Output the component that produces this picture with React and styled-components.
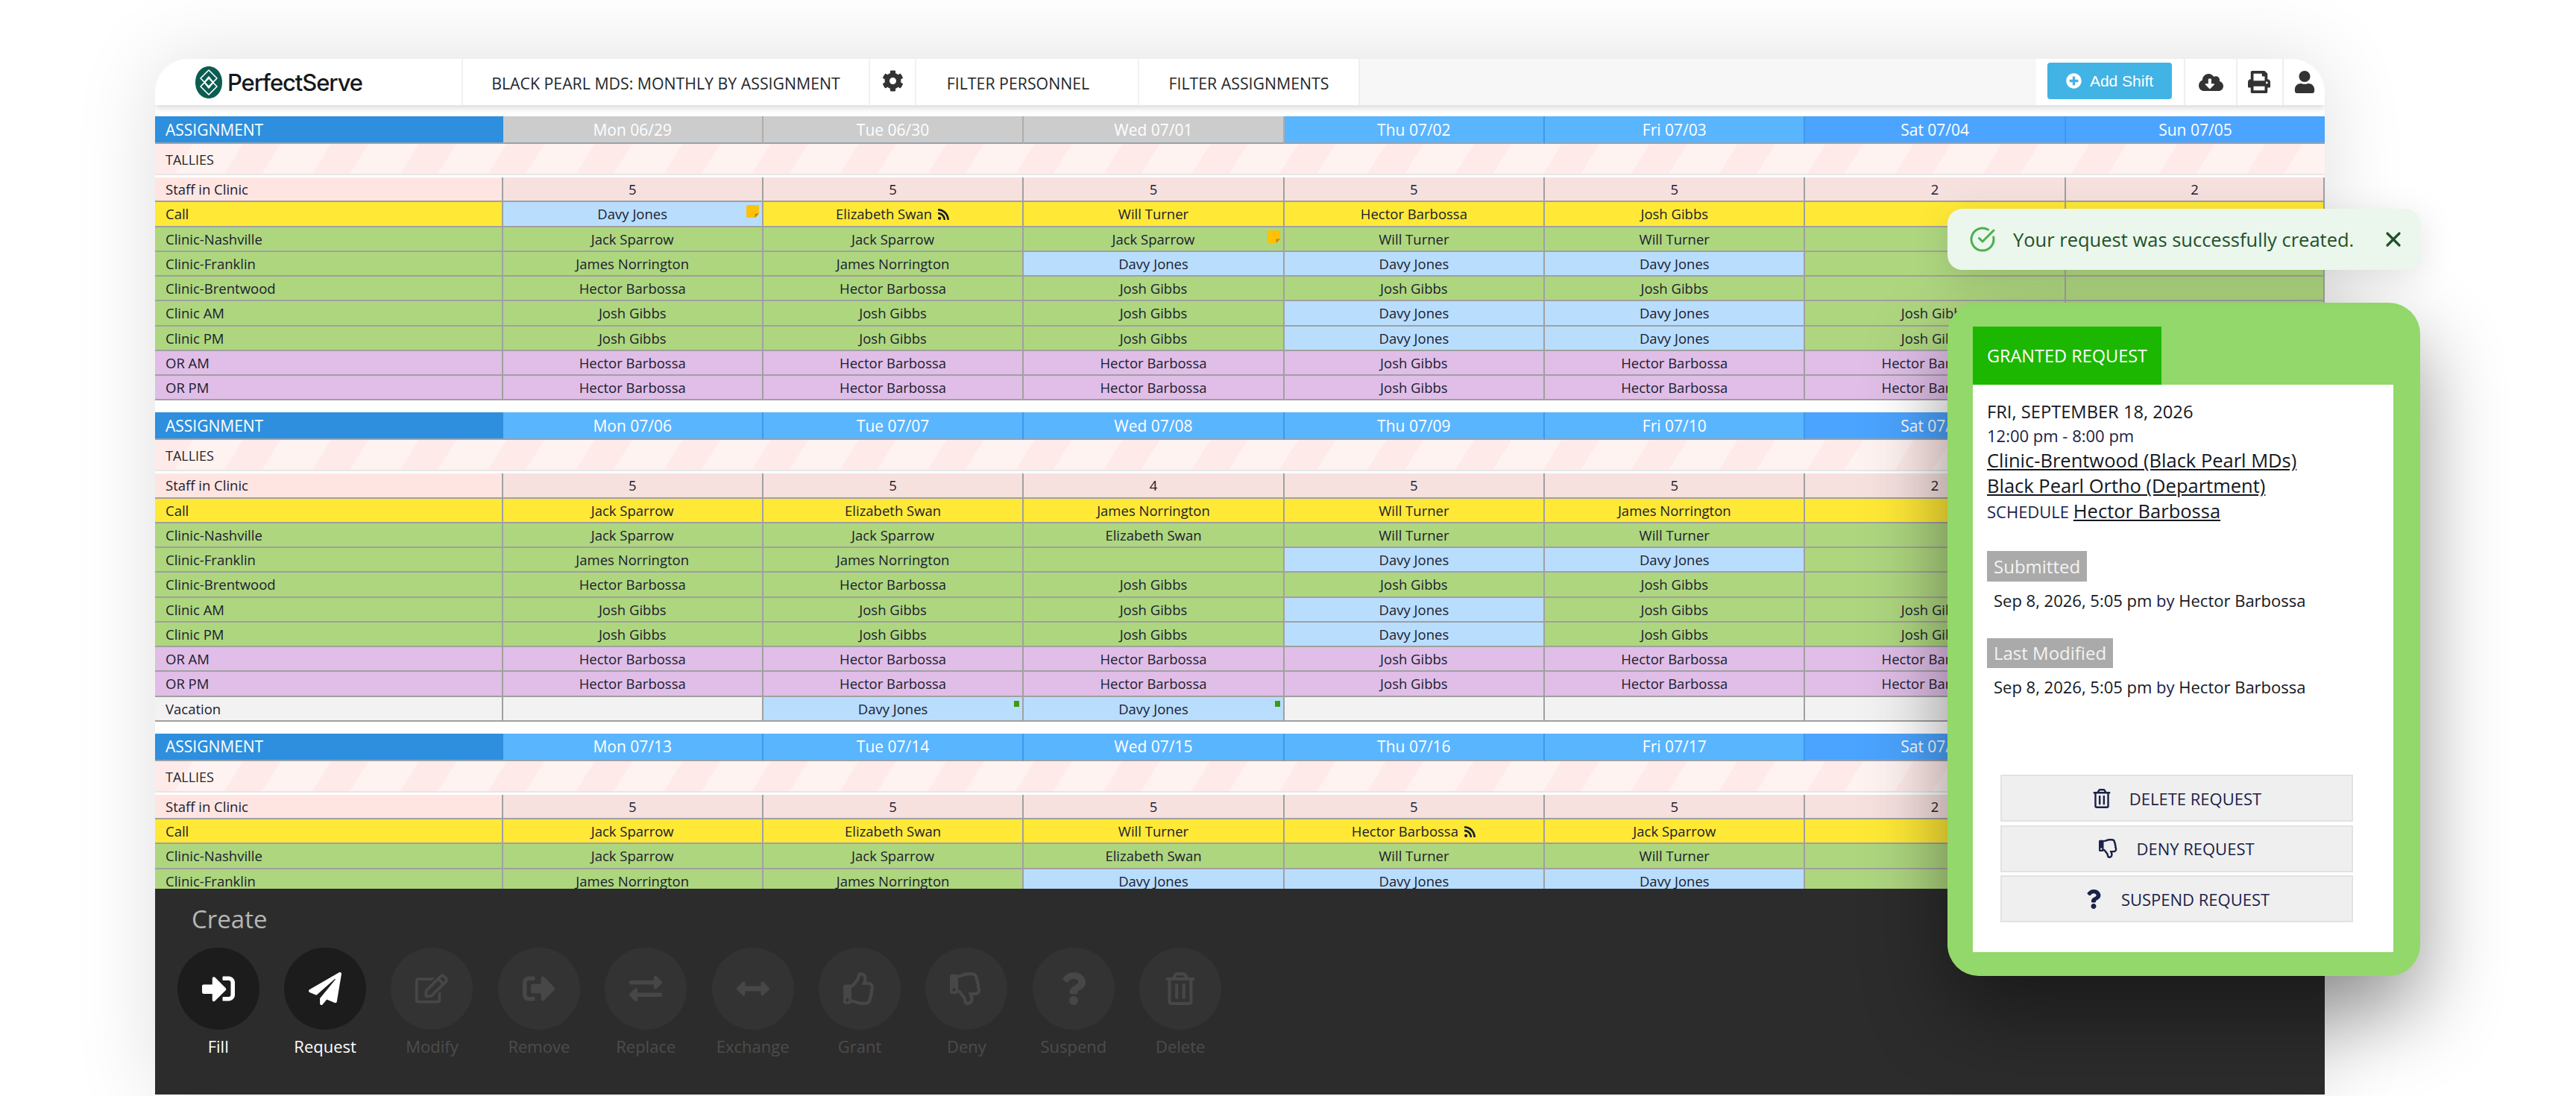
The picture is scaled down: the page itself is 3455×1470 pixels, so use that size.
import React from 'react';
import styled, { createGlobalStyle } from 'styled-components';
import { FaCog, FaCloudDownloadAlt, FaPrint, FaUser, FaRss, FaSignInAlt, FaSignOutAlt, FaPaperPlane, FaRegEdit, FaExchangeAlt, FaArrowsAltH, FaRegThumbsUp, FaRegThumbsDown, FaQuestion, FaRegTrashAlt, FaPlusCircle } from 'react-icons/fa';
import { CircleCheckBig, X } from 'lucide-react';

const Global = createGlobalStyle`
  html, body { margin: 0; padding: 0; background: #fff; }
  body { font-family: "Open Sans", "Liberation Sans", sans-serif; color: #1a2030; }
  * { box-sizing: border-box; }
`;

const Page = styled.div`
  position: relative;
  width: 3455px;
  height: 1470px;
  overflow: hidden;
  padding: 79px 0 0 208px;
`;
const Window = styled.div`
  width: 2910px;
  height: 1389px;
  display: flex;
  flex-direction: column;
  border-radius: 45px 45px 0 0;
  background: #fff;
  overflow: hidden;
  box-shadow: 0 0 110px rgba(0, 0, 0, 0.13);
`;
const Header = styled.header`
  flex: 0 0 62px;
  display: flex;
  align-items: stretch;
  background: #f7f7f7;
  box-shadow: 0 4px 8px rgba(0, 0, 0, 0.14);
  position: relative;
  z-index: 1;
`;
const LogoTab = styled.div`
  width: 411px;
  display: flex;
  align-items: center;
  gap: 7px;
  padding-left: 54px;
  background: #fff;
`;
const Wordmark = styled.span`
  font-family: Inter, "Liberation Sans", sans-serif;
  font-weight: 500;
  font-size: 31px;
  letter-spacing: -1.1px;
  color: #16191c;
`;
const NavTab = styled.div`
  width: ${p => p.$w}px;
  display: flex;
  align-items: center;
  justify-content: center;
  background: #fff;
  border-left: 2px solid #f1f1f1;
  font-size: 21.3px;
  color: #23272b;
  padding: 3px ${p => p.$shift || 0}px 0 0;
  svg { color: #333; font-size: 29px; margin-top: -6px; }
`;
const HeaderSpacer = styled.div`
  flex: 1;
  border-left: 2px solid #eee;
`;
const ActionArea = styled.div`
  width: 387px;
  display: flex;
  background: #fff;
`;
const AddShift = styled.button`
  width: 167px;
  height: 49px;
  margin: 5px 16px 0 15px;
  border: 0;
  border-radius: 4px;
  background: #41b3e4;
  color: #fff;
  font-family: "Liberation Sans", sans-serif;
  font-size: 21px;
  display: flex;
  align-items: center;
  justify-content: center;
  gap: 11px;
  svg { font-size: 21px; }
`;
const IconTab = styled.div`
  width: ${p => p.$w}px;
  display: flex;
  align-items: center;
  justify-content: center;
  border-left: 2px solid #eee;
  color: #333;
  padding-right: ${p => p.$shift || 0}px;
  font-size: ${p => p.$s}px;
`;
const Calendar = styled.main`
  flex: 1;
  min-height: 0;
  padding-top: 15px;
  overflow: hidden;
  display: flex;
  flex-direction: column;
  gap: 16px;
`;
const Week = styled.section`
  flex: none;
`;
const Grid = styled.div`
  display: grid;
  grid-template-columns: 466.5px repeat(6, 349.4px) 1fr;
`;
const DayHead = styled.div`
  height: 37px;
  display: flex;
  align-items: center;
  justify-content: center;
  color: #fff;
  font-size: 21px;
  background: ${p => ({ grey: '#cccccc', light: '#5ab5ff', dark: '#4ba4ff' }[p.$tone])};
  border-bottom: 2px solid #98a2ab;
  border-right: 2px solid ${p => (p.$tone === 'grey' ? '#adadad' : '#3f98ea')};
  &:last-child { border-right: 0; }
`;
const AssignHead = styled(DayHead)`
  background: #2d8fdd;
  justify-content: flex-start;
  padding-left: 14px;
  border-right: 0;
`;
const Tallies = styled.div`
  height: 45px;
  border-bottom: 3px solid #fff;
  display: flex;
  align-items: center;
  padding-left: 14px;
  font-size: 18px;
  color: #23272b;
  background: repeating-linear-gradient(122deg, #feebe9 0 43px, #fff3f2 43px 100px);
  box-shadow: inset 0 -2px 0 #e6e6e6;
`;
const rowBg = { staff: '#ffe5e2', call: '#ffe936', clinic: '#aed67f', or: '#e0bee7', vac: '#f2f2f2' };
const Label = styled.div`
  height: 33.25px;
  display: flex;
  align-items: center;
  padding-left: 14px;
  font-size: 18.5px;
  background: ${p => rowBg[p.$kind]};
  border-bottom: 2px solid #a0a0a0;
  border-right: 2px solid #a0a0a0;
`;
const Cell = styled.div`
  position: relative;
  height: 33.25px;
  display: flex;
  align-items: center;
  justify-content: center;
  gap: 7px;
  font-size: 18.5px;
  background: ${p => (p.$blue ? '#b9ddfd' : p.$kind === 'staff' ? '#f6e1df' : rowBg[p.$kind])};
  border-bottom: 2px solid #a0a0a0;
  border-right: 2px solid #a0a0a0;
  &:last-child { border-right: 0; }
  svg.rss { font-size: 17px; margin-top: 2px; }
`;
const NoteMark = styled.svg`
  position: absolute;
  top: 4px;
  right: 3px;
  width: 18px;
  height: 18px;
`;
const GreenMark = styled.span`
  position: absolute;
  top: 5px;
  right: 4px;
  width: 7px;
  height: 8px;
  background: #3f9a12;
`;
const Dock = styled.footer`
  flex: 0 0 276px;
  background: #2c2c2c;
  position: relative;
  z-index: 1;
  padding: 20px 0 0 13px;
`;
const DockTitle = styled.h2`
  margin: 0 0 17px 36px;
  font-weight: 400;
  font-size: 33px;
  line-height: 42px;
  color: #b5b5b5;
`;
const DockRow = styled.div`
  display: flex;
`;
const DockItem = styled.div`
  width: 143.4px;
  display: flex;
  flex-direction: column;
  align-items: center;
  gap: 7px;
  font-size: 22px;
  line-height: 30px;
  color: ${p => (p.$on ? '#fff' : '#4c4c4c')};
`;
const DockCircle = styled.div`
  width: 110px;
  height: 110px;
  border-radius: 50%;
  display: flex;
  align-items: center;
  justify-content: center;
  font-size: 44px;
  background: ${p => (p.$on ? '#1c1c1c' : '#333333')};
  color: ${p => (p.$on ? '#fff' : '#474747')};
`;
const Toast = styled.div`
  position: absolute;
  left: 2612px;
  top: 280px;
  width: 634px;
  height: 82px;
  display: flex;
  align-items: center;
  padding-left: 29px;
  border-radius: 20px;
  background: #ebf6ec;
  color: #1f5128;
  font-size: 25.5px;
  box-shadow: 0 10px 50px rgba(0, 0, 0, 0.12);
  z-index: 3;
  span { margin-left: 23px; flex: 1; white-space: nowrap; }
`;
const ToastClose = styled.div`
  width: 52px;
  display: flex;
  color: #1f5128;
`;
const Popup = styled.aside`
  position: absolute;
  left: 2612px;
  top: 406px;
  width: 634px;
  height: 903px;
  padding: 32px 36px 32px 34px;
  border-radius: 42px;
  background: #93d86a;
  box-shadow: 0 50px 110px rgba(0, 0, 0, 0.42);
  z-index: 2;
  display: flex;
  flex-direction: column;
`;
const PopupTab = styled.div`
  flex: none;
  width: 253px;
  height: 78px;
  display: flex;
  align-items: center;
  justify-content: center;
  background: #1cb700;
  color: #fff;
  font-size: 23.5px;
`;
const PopupBody = styled.div`
  flex: 1;
  background: #fff;
  padding: 20px 0 40px 19px;
  display: flex;
  flex-direction: column;
  align-items: flex-start;
`;
const Line = styled.div`
  line-height: ${p => p.$h || 34}px;
  font-size: ${p => p.$s || 25.5}px;
  white-space: nowrap;
  color: ${p => p.$c || '#14181f'};
`;
const Linked = styled.a`
  color: #14181f;
  font-size: 25.5px;
  text-decoration: underline;
`;
const Badge = styled.div`
  margin-top: 36px;
  height: ${p => p.$h}px;
  line-height: ${p => p.$h}px;
  padding: 0 9px;
  background: #aaaaaa;
  color: #f3f3f3;
  font-size: 24px;
`;
const Stamp = styled.div`
  margin: 10px 0 0 9px;
  line-height: 30px;
  font-size: 22px;
  color: #14181f;
  b { font-weight: 400; color: #1a2248; }
`;
const Buttons = styled.div`
  margin: auto 0 0 18px;
  display: flex;
  flex-direction: column;
  gap: 4.5px;
`;
const ReqButton = styled.button`
  width: 473px;
  height: 63px;
  border: 2px solid #e2e2e2;
  background: #efefef;
  display: flex;
  align-items: center;
  justify-content: center;
  gap: 24px;
  font-family: "Open Sans", sans-serif;
  font-size: 22px;
  color: #1a2248;
  svg { font-size: 26px; }
`;

const D = 'Davy Jones', J = 'Jack Sparrow', N = 'James Norrington', H = 'Hector Barbossa', G = 'Josh Gibbs', W = 'Will Turner', E = 'Elizabeth Swan';

const weeks = [
  {
    days: [['Mon 06/29', 'grey'], ['Tue 06/30', 'grey'], ['Wed 07/01', 'grey'], ['Thu 07/02', 'light'], ['Fri 07/03', 'light'], ['Sat 07/04', 'dark'], ['Sun 07/05', 'dark']],
    staff: [5, 5, 5, 5, 5, 2, 2],
    rows: [
      ['Call', 'call', [{ n: D, mark: 'note' }, { n: E, rss: true }, W, H, G, '', '']],
      ['Clinic-Nashville', 'clinic', [J, J, { n: J, mark: 'note' }, W, W, '', '']],
      ['Clinic-Franklin', 'clinic', [N, N, D, D, D, '', '']],
      ['Clinic-Brentwood', 'clinic', [H, H, G, G, G, '', '']],
      ['Clinic AM', 'clinic', [G, G, G, D, D, G, '']],
      ['Clinic PM', 'clinic', [G, G, G, D, D, G, '']],
      ['OR AM', 'or', [H, H, H, G, H, H, '']],
      ['OR PM', 'or', [H, H, H, G, H, H, '']],
    ],
  },
  {
    days: [['Mon 07/06', 'light'], ['Tue 07/07', 'light'], ['Wed 07/08', 'light'], ['Thu 07/09', 'light'], ['Fri 07/10', 'light'], ['Sat 07/11', 'dark'], ['Sun 07/12', 'dark']],
    staff: [5, 5, 4, 5, 5, 2, 2],
    rows: [
      ['Call', 'call', [J, E, N, W, N, '', '']],
      ['Clinic-Nashville', 'clinic', [J, J, E, W, W, '', '']],
      ['Clinic-Franklin', 'clinic', [N, N, '', D, D, '', '']],
      ['Clinic-Brentwood', 'clinic', [H, H, G, G, G, '', '']],
      ['Clinic AM', 'clinic', [G, G, G, D, G, G, '']],
      ['Clinic PM', 'clinic', [G, G, G, D, G, G, '']],
      ['OR AM', 'or', [H, H, H, G, H, H, '']],
      ['OR PM', 'or', [H, H, H, G, H, H, '']],
      ['Vacation', 'vac', ['', { n: D, mark: 'green' }, { n: D, mark: 'green' }, '', '', '', '']],
    ],
  },
  {
    days: [['Mon 07/13', 'light'], ['Tue 07/14', 'light'], ['Wed 07/15', 'light'], ['Thu 07/16', 'light'], ['Fri 07/17', 'light'], ['Sat 07/18', 'dark'], ['Sun 07/19', 'dark']],
    staff: [5, 5, 5, 5, 5, 2, 2],
    rows: [
      ['Call', 'call', [J, E, W, { n: H, rss: true }, J, '', '']],
      ['Clinic-Nashville', 'clinic', [J, J, E, W, W, '', '']],
      ['Clinic-Franklin', 'clinic', [N, N, D, D, D, '', '']],
    ],
  },
];

const dock = [
  ['Fill', FaSignInAlt, true], ['Request', FaPaperPlane, true], ['Modify', FaRegEdit], ['Remove', FaSignOutAlt], ['Replace', FaExchangeAlt],
  ['Exchange', FaArrowsAltH], ['Grant', FaRegThumbsUp], ['Deny', FaRegThumbsDown], ['Suspend', FaQuestion], ['Delete', FaRegTrashAlt],
];

const Logo = () => (
  <svg width="36" height="43" viewBox="0 0 36 43">
    <path d="M18 0C28 0 36 9 36 21.5S28 43 18 43 0 34 0 21.5 8 0 18 0Z" fill="#0b5d50" />
    <g fill="none" stroke="#fff" strokeWidth="1.6" strokeLinejoin="round">
      <path d="M18 5 L29 16 L18 27 L7 16 Z" />
      <path d="M18 38 L29 27 L18 16 L7 27 Z" />
      <path d="M18 14 L24 21.5 L18 29 L12 21.5 Z" />
    </g>
  </svg>
);

const Sticky = () => (
  <NoteMark viewBox="0 0 18 18">
    <path d="M2 0H15C16.2 0 17 .8 17 2V12L12 17H2C.8 17 0 16.2 0 15V2C0 .8.8 0 2 0Z" fill="#ffc107" />
    <path d="M17 11.5H12.6C11.8 11.5 11.5 12 11.5 12.6V17Z" fill="#b98a12" />
  </NoteMark>
);

const ScheduleCell = ({ kind, value }) => {
  const cell = typeof value === 'string' ? { n: value } : value;
  return (
    <Cell $kind={kind} $blue={cell.n === D}>
      {cell.n}
      {cell.rss && <FaRss className="rss" />}
      {cell.mark === 'note' && <Sticky />}
      {cell.mark === 'green' && <GreenMark />}
    </Cell>
  );
};

export default function App() {
  return (
    <Page>
      <Global />
      <Window>
        <Header>
          <LogoTab><Logo /><Wordmark>PerfectServe</Wordmark></LogoTab>
          <NavTab $w={546}>BLACK PEARL MDS: MONTHLY BY ASSIGNMENT</NavTab>
          <NavTab $w={62}><FaCog /></NavTab>
          <NavTab $w={299} $shift={24}>FILTER PERSONNEL</NavTab>
          <NavTab $w={296}>FILTER ASSIGNMENTS</NavTab>
          <HeaderSpacer />
          <ActionArea>
            <AddShift><FaPlusCircle />Add Shift</AddShift>
            <IconTab $w={70} $s={33}><FaCloudDownloadAlt /></IconTab>
            <IconTab $w={62} $s={30} $shift={3}><FaPrint /></IconTab>
            <IconTab $w={57} $s={30}><FaUser /></IconTab>
          </ActionArea>
        </Header>
        <Calendar>
          {weeks.map((week, i) => (
            <Week key={i}>
              <Grid>
                <AssignHead $tone="dark">ASSIGNMENT</AssignHead>
                {week.days.map(([d, tone]) => <DayHead key={d} $tone={tone}>{d}</DayHead>)}
              </Grid>
              <Tallies>TALLIES</Tallies>
              <Grid>
                <Label $kind="staff">Staff in Clinic</Label>
                {week.staff.map((n, k) => <Cell key={k} $kind="staff">{n}</Cell>)}
                {week.rows.map(([label, kind, cells]) => (
                  <React.Fragment key={label}>
                    <Label $kind={kind}>{label}</Label>
                    {cells.map((c, k) => <ScheduleCell key={k} kind={kind} value={c} />)}
                  </React.Fragment>
                ))}
              </Grid>
            </Week>
          ))}
        </Calendar>
        <Dock>
          <DockTitle>Create</DockTitle>
          <DockRow>
            {dock.map(([label, Icon, on]) => (
              <DockItem key={label} $on={on}>
                <DockCircle $on={on}><Icon /></DockCircle>
                {label}
              </DockItem>
            ))}
          </DockRow>
        </Dock>
      </Window>
      <Toast>
        <CircleCheckBig size={36} color="#4caf50" strokeWidth={2} />
        <span>Your request was successfully created.</span>
        <ToastClose><X size={32} strokeWidth={2.4} /></ToastClose>
      </Toast>
      <Popup>
        <PopupTab>GRANTED REQUEST</PopupTab>
        <PopupBody>
          <Line $h={32} $s={23.7}>FRI, SEPTEMBER 18, 2026</Line>
          <Line $h={32} $s={22} $c="#1a2248">12:00 pm - 8:00 pm</Line>
          <Line><Linked>Clinic-Brentwood (Black Pearl MDs)</Linked></Line>
          <Line><Linked>Black Pearl Ortho (Department)</Linked></Line>
          <Line $s={22} $c="#1a2248">SCHEDULE <Linked>Hector Barbossa</Linked></Line>
          <Badge $h={41}>Submitted</Badge>
          <Stamp>Sep 8, 2026, 5:05 pm <b>by</b> Hector Barbossa</Stamp>
          <Badge $h={40}>Last Modified</Badge>
          <Stamp>Sep 8, 2026, 5:05 pm <b>by</b> Hector Barbossa</Stamp>
          <Buttons>
            <ReqButton><FaRegTrashAlt />DELETE REQUEST</ReqButton>
            <ReqButton><FaRegThumbsDown />DENY REQUEST</ReqButton>
            <ReqButton><FaQuestion />SUSPEND REQUEST</ReqButton>
          </Buttons>
        </PopupBody>
      </Popup>
    </Page>
  );
}
